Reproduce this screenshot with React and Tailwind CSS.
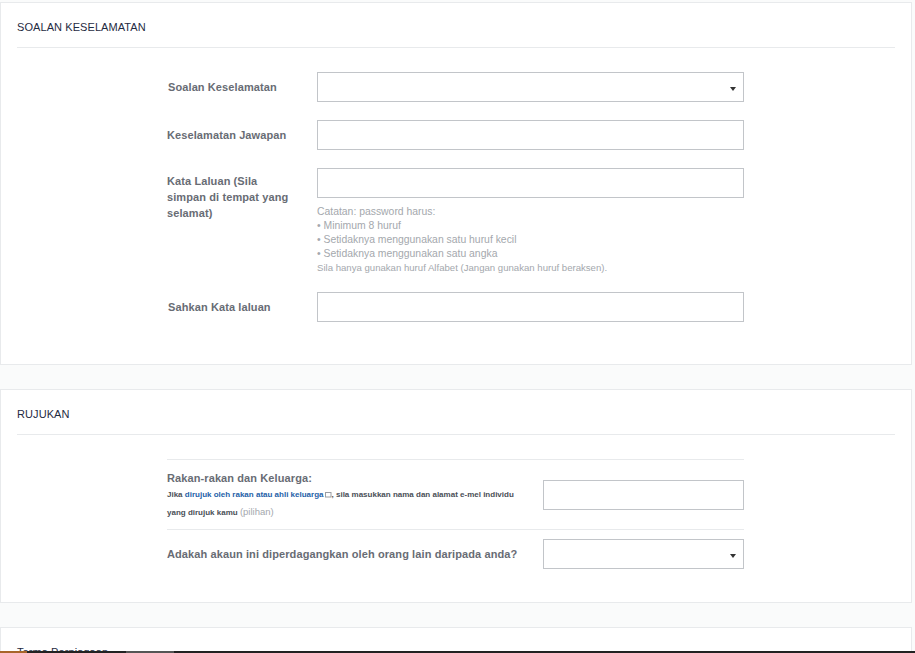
const labelCls = "text-[11px] leading-[16px] font-bold text-[#686c74] tracking-[0.1px]";

function Caret() {
  return <span className="absolute right-[7px] top-[14px] h-0 w-0 border-x-[3.5px] border-t-[4px] border-x-transparent border-t-[#333]" />;
}

function Box({ select, className = "w-[427px]" }) {
  return (
    <div className={`relative h-[30px] shrink-0 border border-[#c2c5c9] bg-white ${className}`}>
      {select && <Caret />}
    </div>
  );
}

function Card({ title, children, className }) {
  return (
    <section className={`border border-[#e8eaec] bg-white px-[16px] ${className}`}>
      <h2 className="h-[45px] border-b border-[#e8eaec] pt-[16px] text-[11px] leading-[16px] font-normal tracking-[0.08px] text-[#1f2b42]">{title}</h2>
      {children}
    </section>
  );
}

export default function App() {
  return (
    <div className="relative h-[653px] w-[915px] overflow-hidden bg-[#fafbfb] font-['Liberation_Sans',Arial,sans-serif]">
      <div className="w-[912px] pt-[2px]">
        <Card title="SOALAN KESELAMATAN" className="h-[363px]">
          <div className="ml-[150px] flex flex-col pt-[24px]">
            <div className="flex h-[30px] items-center">
              <label className={`w-[150px] pl-[1px] ${labelCls}`}>Soalan Keselamatan</label>
              <Box select />
            </div>
            <div className="mt-[18px] flex h-[30px] items-center">
              <label className={`w-[150px] ${labelCls}`}>Keselamatan Jawapan</label>
              <Box />
            </div>
            <div className="mt-[18px] flex">
              <label className={`w-[150px] pt-[5px] pr-[20px] ${labelCls}`}>Kata Laluan (Sila simpan di tempat yang selamat)</label>
              <div>
                <Box />
                <div className="mt-[7px] w-[427px] text-[10.4px] leading-[14px] text-[#a4a8ad]">
                  <p>Catatan: password harus:</p>
                  <p>• Minimum 8 huruf</p>
                  <p>• Setidaknya menggunakan satu huruf kecil</p>
                  <p>• Setidaknya menggunakan satu angka</p>
                  <p className="text-[9.6px]">Sila hanya gunakan huruf Alfabet (Jangan gunakan huruf beraksen).</p>
                </div>
              </div>
            </div>
            <div className="mt-[17px] flex h-[30px] items-center">
              <label className={`w-[150px] pl-[1px] ${labelCls}`}>Sahkan Kata laluan</label>
              <Box />
            </div>
          </div>
        </Card>

        <Card title="RUJUKAN" className="mt-[24px] h-[214px]">
          <div className="ml-[150px] w-[577px] pt-[24px]">
            <div className="flex h-[71px] items-start border-y border-[#e8eaec]">
              <div className="w-[376px] pt-[11px]">
                <p className="text-[11px] leading-[14px] font-bold tracking-[0.1px] text-[#686c74]">Rakan-rakan dan Keluarga:</p>
                <p className="mt-[1px] w-[350px] text-[8px] leading-[17px] font-bold text-[#4a4f57]">
                  Jika <span className="text-[#1f5fa8]">dirujuk oleh rakan atau ahli keluarga</span>
                  <svg className="inline-block align-[-1px]" width="8" height="7" viewBox="0 0 8 7" fill="none">
                    <rect x="1.5" y="1.5" width="5.5" height="4.5" stroke="#9a9da2" />
                  </svg>
                  , sila masukkan nama dan alamat e-mel individu yang dirujuk kamu{" "}
                  <span className="text-[9.5px] font-normal text-[#a4a8ad]">(pilihan)</span>
                </p>
              </div>
              <Box className="mt-[20px] w-[201px]" />
            </div>
            <div className="flex h-[39px] items-center pt-[8px]">
              <label className="w-[376px] text-[11px] leading-[16px] font-bold tracking-[0.1px] text-[#686c74]">Adakah akaun ini diperdagangkan oleh orang lain daripada anda?</label>
              <Box select className="w-[201px]" />
            </div>
          </div>
        </Card>

        <Card title="Terma Perniagaan" className="mt-[24px] h-[100px]" />
      </div>

      <div className="absolute bottom-0 left-0 flex h-[2px] w-full bg-[#222222]">
        <div className="h-full w-[27px] bg-[#a8652a]" />
        <div className="ml-[99px] h-full w-[48px] bg-[#555555]" />
      </div>
    </div>
  );
}
